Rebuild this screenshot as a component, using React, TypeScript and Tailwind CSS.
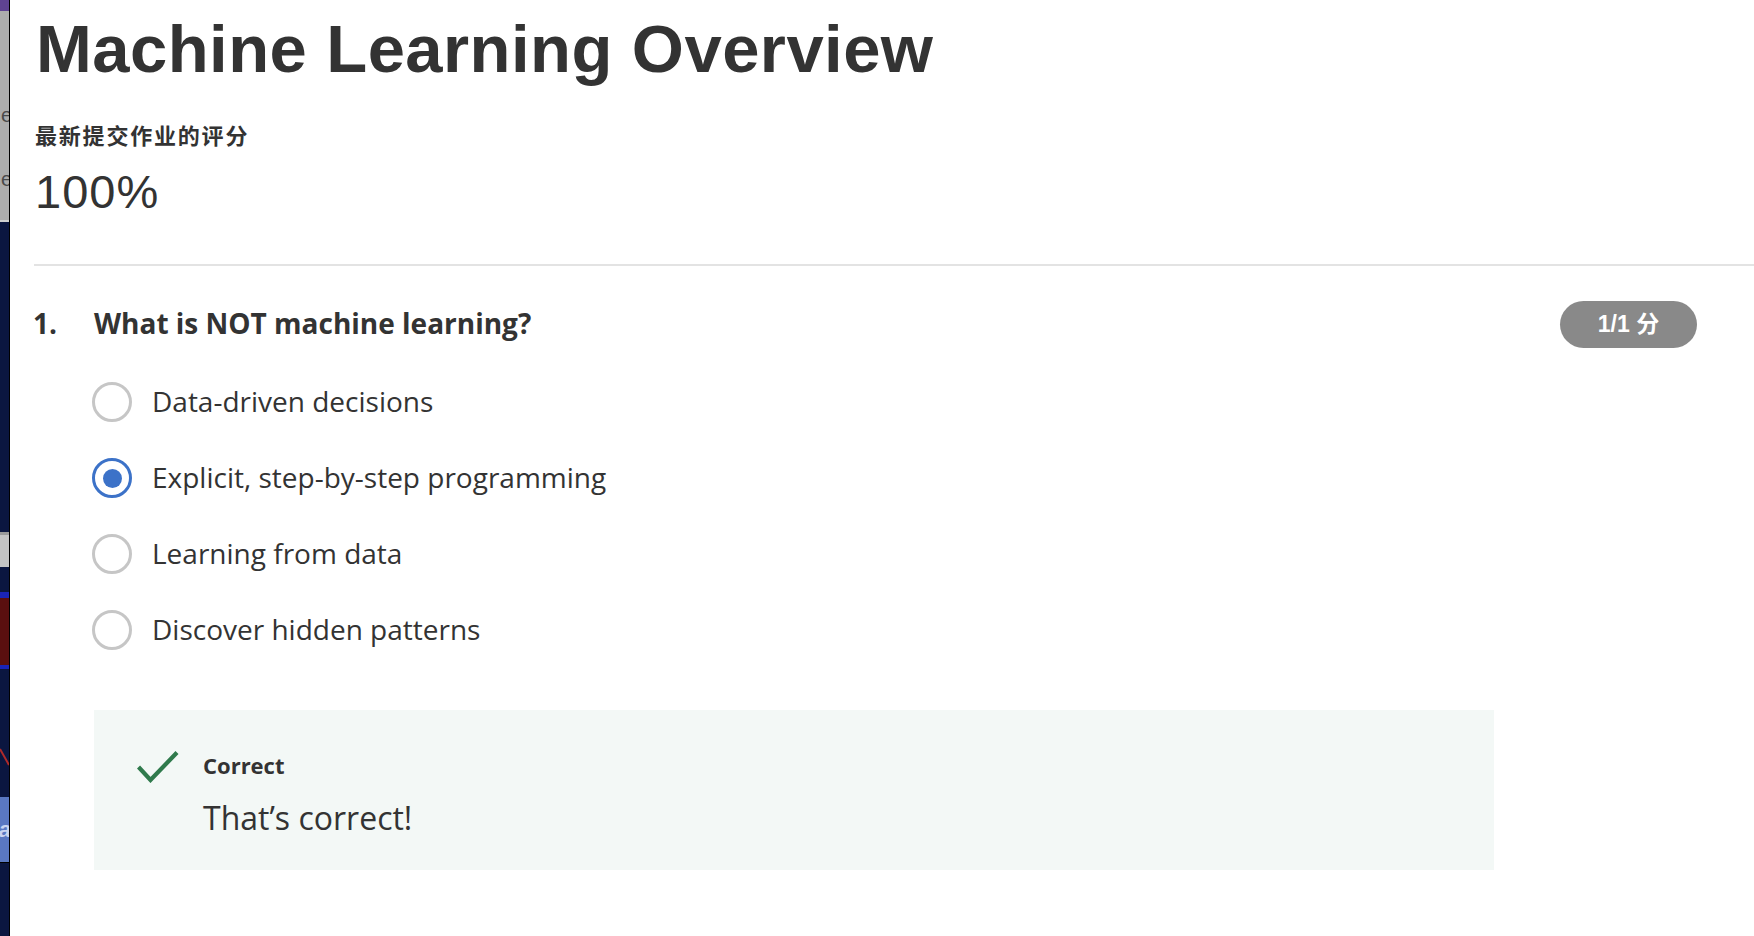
import React from "react";

function Radio({ checked }: { checked?: boolean }) {
  if (checked) {
    return (
      <div className="w-[40px] h-[40px] rounded-full border-[3px] border-[#3c72c8] flex items-center justify-center shrink-0">
        <div className="w-[19px] h-[19px] rounded-full bg-[#3c72c8]" />
      </div>
    );
  }
  return <div className="w-[40px] h-[40px] rounded-full border-[3px] border-[#c6c6c6] shrink-0" />;
}

function SideStrip() {
  return (
    <div className="w-[10px] shrink-0 flex flex-col border-r border-black overflow-hidden">
      <div className="h-[11px] bg-[#5f4392]" />
      <div className="h-[209px] bg-[#adadad] flex flex-col items-end overflow-hidden">
        <span className="mt-[92px] text-[20px] leading-[24px] text-[#4a4a4a] font-['Liberation_Sans',sans-serif] -mr-[3px]">e</span>
        <span className="mt-[40px] text-[20px] leading-[24px] text-[#4a4a4a] font-['Liberation_Sans',sans-serif] -mr-[3px]">e</span>
      </div>
      <div className="h-[2px] bg-[#d0d0d0]" />
      <div className="h-[310px] bg-[#0b1640]" />
      <div className="h-[3px] bg-[#9a9a9a]" />
      <div className="h-[32px] bg-[#c4c4c4]" />
      <div className="h-[25px] bg-[#0b1640]" />
      <div className="h-[73px] bg-[#5a0f0f] flex flex-col">
        <div className="h-[6px] bg-[#1a24b8]" />
      </div>
      <div className="h-[4px] bg-[#1a24b8]" />
      <div className="h-[128px] bg-[#0b1640] relative">
        <svg className="absolute left-0 top-[78px]" width="9" height="22" viewBox="0 0 9 22">
          <line x1="0" y1="2" x2="9" y2="18" stroke="#b02a2a" strokeWidth="2" />
        </svg>
      </div>
      <div className="h-[65px] bg-[#5a78c2] flex items-center justify-end overflow-hidden">
        <span className="text-[22px] font-bold italic text-[#c8d4f0] font-['Liberation_Sans',sans-serif] -mr-[2px]">a</span>
      </div>
      <div className="h-[1px] bg-black" />
      <div className="flex-1 bg-[#0b1640]" />
    </div>
  );
}

export default function App() {
  const options = [
    { label: "Data-driven decisions", checked: false },
    { label: "Explicit, step-by-step programming", checked: true },
    { label: "Learning from data", checked: false },
    { label: "Discover hidden patterns", checked: false },
  ];
  return (
    <div className="w-full h-[936px] flex bg-white overflow-hidden">
      <SideStrip />
      <div className="flex-1 flex flex-col pl-[23px] text-[#333333]">
        <h1 className="mt-[15px] ml-[3px] text-[67px] leading-[67px] font-bold font-['Liberation_Sans',Arial,sans-serif] tracking-[0.45px] whitespace-nowrap">
          Machine Learning Overview
        </h1>
        <div className="mt-[38px] ml-[2px] text-[22px] leading-[28px] tracking-[1.8px] font-semibold font-['Noto_Sans_CJK_SC',sans-serif]">
          最新提交作业的评分
        </div>
        <div className="mt-[20px] ml-[2px] text-[47px] leading-[47px] tracking-[1px] font-['Liberation_Sans',Arial,sans-serif]">
          100%
        </div>
        <div className="mt-[49px] ml-[1px] h-[2px] bg-[#e3e3e3]" />
        <div className="mt-[33px] h-[48px] flex items-center pr-[57px] font-['Open_Sans',sans-serif]">
          <div className="w-[61px] shrink-0 text-[28px] leading-[48px] font-bold">1.</div>
          <div className="flex-1 text-[28px] leading-[48px] font-bold">What is NOT machine learning?</div>
          <div className="w-[137px] h-[47px] mt-[2px] rounded-full bg-[#898989] flex items-center justify-center text-white text-[23px] font-bold font-['Liberation_Sans','Noto_Sans_CJK_SC',sans-serif]">
            1/1 分
          </div>
        </div>
        <div className="mt-[17px] ml-[59px] flex flex-col font-['Open_Sans',sans-serif]">
          {options.map((o) => (
            <div key={o.label} className="h-[76px] flex items-center gap-[20px]">
              <Radio checked={o.checked} />
              <span className="text-[28px] leading-[76px] text-[#333333] -mt-[3px]">{o.label}</span>
            </div>
          ))}
        </div>
        <div className="mt-[42px] ml-[61px] w-[1400px] h-[160px] bg-[#f3f8f6] flex items-start pl-[43px] pt-[40px] font-['Open_Sans',sans-serif]">
          <svg width="42" height="32" viewBox="0 0 42 32" className="shrink-0 mt-[1px]">
            <polyline points="1.5,16 13.5,29 40,1.5" fill="none" stroke="#2f7a4c" strokeWidth="4.2" strokeLinecap="butt" strokeLinejoin="miter" />
          </svg>
          <div className="ml-[24px] flex flex-col">
            <div className="text-[22px] leading-[30px] font-bold text-[#333333]">Correct</div>
            <div className="mt-[18px] text-[32px] leading-[40px] text-[#333333]">That’s correct!</div>
          </div>
        </div>
      </div>
    </div>
  );
}
